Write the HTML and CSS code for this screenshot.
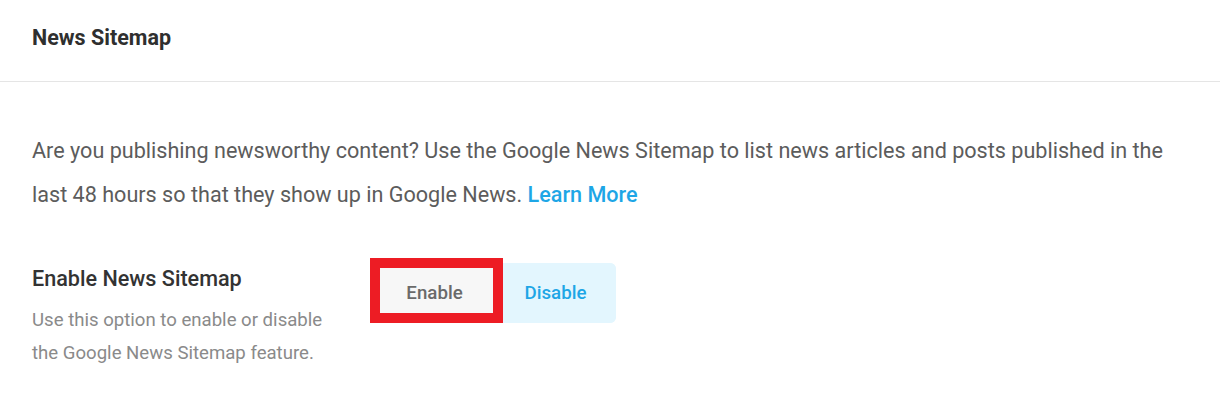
FILE: index.html
```html
<!DOCTYPE html>
<html>
<head>
<meta charset="utf-8">
<link rel="stylesheet" href="styles.css">
</head>
<body>
<div class="panel">
  <div class="panel-header">
    <h2 class="panel-title">News Sitemap</h2>
  </div>
  <div class="panel-body">
    <p class="intro">Are you publishing newsworthy content? Use the Google News Sitemap to list news articles and posts published in the last 48 hours so that they show up in Google News. <a class="link" href="#">Learn More</a></p>
    <div class="setting">
      <div class="setting-info">
        <div class="setting-label">Enable News Sitemap</div>
        <div class="setting-desc">Use this option to enable or disable the Google News Sitemap feature.</div>
      </div>
      <div class="toggle-group">
        <button class="toggle toggle-enable">Enable<span class="highlight"></span></button>
        <button class="toggle toggle-disable">Disable</button>
      </div>
    </div>
  </div>
</div>
</body>
</html>
```

FILE: styles.css
```css
* { box-sizing: border-box; }
html, body { margin: 0; padding: 0; background: #fff; }
body { font-family: Roboto, "Noto Sans", sans-serif; }

.panel { width: 1220px; }
.panel-header {
  height: 82px;
  border-bottom: 1px solid #e5e5e5;
  padding: 26px 32px 0;
}
.panel-title {
  margin: 0;
  font-size: 21.5px;
  font-weight: 700;
  color: #2f2f2f;
  line-height: 24px;
}
.panel-body { padding: 47px 32px 0; }
.intro {
  margin: 0;
  font-size: 21.6px;
  line-height: 44px;
  color: #5c5c5c;
  max-width: 1156px;
}
.link { color: #1ea6e6; text-decoration: none; font-weight: 500; }

.setting {
  display: flex;
  align-items: flex-start;
  margin-top: 48px;
}
.setting-info { width: 338px; }
.setting-label {
  font-size: 21.6px;
  font-weight: 500;
  color: #333;
  line-height: 28px;
}
.setting-desc {
  margin-top: 11px;
  max-width: 310px;
  font-size: 18.6px;
  line-height: 33px;
  color: #8a8a8a;
}
.toggle-group {
  display: flex;
  margin-top: -2px;
  border-radius: 6px;
  background: #e3f6fe;
}
.toggle {
  position: relative;
  height: 60px;
  border: 0;
  font-family: Roboto, "Noto Sans", sans-serif;
  font-size: 18.7px;
  font-weight: 500;
  padding: 0;
  cursor: pointer;
}
.toggle-enable {
  width: 133px;
  padding-right: 4px;
  background: #f7f7f7;
  color: #6a6a6a;
  border-radius: 6px 0 0 6px;
}
.toggle-disable {
  width: 113px;
  padding-right: 8px;
  background: #e3f6fe;
  color: #1ea6e6;
  border-radius: 0 6px 6px 0;
}
.highlight {
  position: absolute;
  left: 0;
  right: 0;
  top: -5px;
  bottom: 0;
  border: 10px solid #ed1c24;
}
```
